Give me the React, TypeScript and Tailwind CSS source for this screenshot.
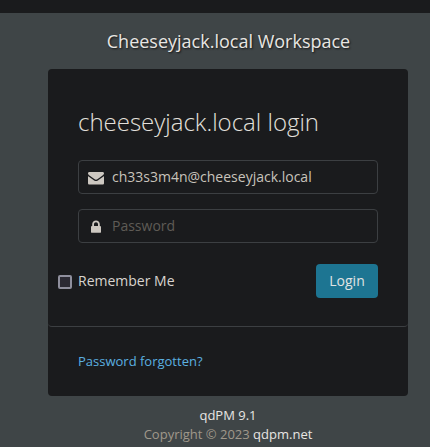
import { useState } from "react";

function EnvelopeIcon() {
  return (
    <svg width="16" height="13" viewBox="0 0 16 13" className="shrink-0" fill="#cdc8c1" aria-hidden="true">
      <path d="M1.4 0h13.2C15.4 0 16 .6 16 1.3c0 .9-.7 1.8-1.5 2.3L9.7 7C9.2 7.300 8.600 7.800 8 7.800S6.800 7.300 6.300 7L1.500 3.600C.8 3.100 0 2.200 0 1.500 0 .7.5 0 1.400 0Z" />
      <path d="M0 4.100c.3.300.6.500.900.700l4.600 3.200c.7.500 1.600 1.100 2.500 1.100s1.800-.6 2.500-1.100l4.600-3.200c.3-.2.600-.400.900-.700v7.100c0 .8-.6 1.400-1.400 1.400H1.400C.6 12.600 0 12 0 11.200V4.100Z" />
    </svg>
  );
}

function LockIcon() {
  return (
    <svg width="10" height="13" viewBox="0 0 10 13" className="shrink-0" fill="#cdc8c1" aria-hidden="true">
      <path d="M3 6h4V4.300C7 3.200 6.100 2.300 5 2.300s-2 .9-2 2V6Zm7 .9v5c0 .5-.4.900-.900.900H.9c-.5 0-.9-.4-.9-.9v-5C0 6.400.4 6 .9 6h.3V4.300C1.200 2.200 2.900.500 5 .500s3.800 1.700 3.800 3.800V6h.3c.5 0 .9.400.9.900Z" />
    </svg>
  );
}

export default function App() {
  const [email, setEmail] = useState("ch33s3m4n@cheeseyjack.local");
  const [remember, setRemember] = useState(false);

  return (
    <div className="h-[447px] w-[430px] overflow-hidden bg-[#3f4547] font-['Open_Sans',sans-serif] text-[#d8d4cf]">
      <div className="h-[13px] bg-[#1a1b1d]" />
      <h1 className="ml-12 flex h-14 w-[360px] items-center justify-center pl-px text-lg text-[#e8e6e3] [text-shadow:1px_1px_2px_#000000b3]">
        Cheeseyjack.local Workspace
      </h1>
      <main className="ml-12 h-[327px] w-[360px] rounded-[4px] bg-[#1a1b1d]">
        <form className="h-[258px] rounded-b-[4px] border-b border-[#3c3f42] px-[30px] pt-[38px]" onSubmit={(e) => e.preventDefault()}>
          <h2 className="h-[53px] text-2xl leading-[30px] font-light text-[#e3e0dc]">cheeseyjack.local login</h2>
          <label className="flex h-[34px] items-center rounded-[4px] border border-[#3c3f42] pl-[9px]">
            <span className="mt-[3px] flex w-4 justify-center"><EnvelopeIcon /></span>
            <input
              aria-label="Email"
              className="ml-2 w-[250px] bg-transparent text-sm leading-5 text-[#c8c3bb] outline-none"
              value={email}
              onChange={(e) => setEmail(e.target.value)}
            />
          </label>
          <label className="mt-[15px] flex h-[34px] items-center rounded-[4px] border border-[#3c3f42] pl-[9px]">
            <span className="mt-px flex w-4 justify-center"><LockIcon /></span>
            <input
              aria-label="Password"
              type="password"
              placeholder="Password"
              className="ml-2 w-[250px] bg-transparent text-sm leading-5 outline-none placeholder:text-[#5f5b56]"
            />
          </label>
          <div className="mt-[21px] flex h-[34px] items-center justify-between">
            <label className="-ml-5 flex items-center gap-1.5 text-sm">
              <input
                type="checkbox"
                checked={remember}
                onChange={(e) => setRemember(e.target.checked)}
                className="mt-0.5 size-[14px] appearance-none rounded-[2px] border-2 border-[#8f8f9d] bg-[#2b2a33] checked:bg-[#1d7592]"
              />
              Remember Me
            </label>
            <button className="h-[34px] w-[62px] rounded-[4px] bg-[#1d7592] text-sm text-[#e0e3e3]">Login</button>
          </div>
        </form>
        <a href="#" className="ml-[30px] mt-6 inline-block text-[13px] leading-5 text-[#5bb0e0]">Password forgotten?</a>
      </main>
      <footer className="ml-12 mt-[10px] w-[360px] text-center text-[13px] leading-[19px] text-[#a0988b]">
        <div className="text-[#e8e6e3]">qdPM 9.1</div>
        <div>Copyright © 2023 <a href="#" className="text-[#e8e6e3]">qdpm.net</a></div>
      </footer>
    </div>
  );
}
